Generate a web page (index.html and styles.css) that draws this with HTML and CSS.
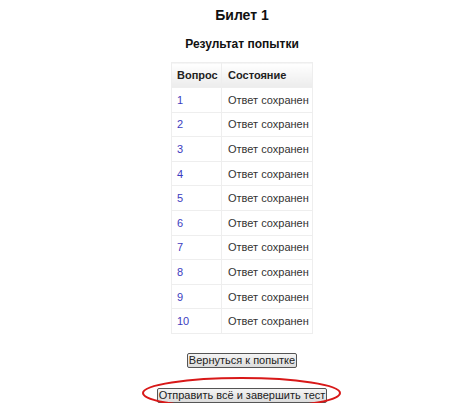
FILE: index.html
```html
<!DOCTYPE html>
<html lang="ru">
<head>
<meta charset="utf-8">
<title>Билет 1</title>
<link rel="stylesheet" href="styles.css">
</head>
<body>
<div class="page">
  <h1 class="title">Билет 1</h1>
  <h2 class="subtitle">Результат попытки</h2>
  <table class="summary">
    <thead>
      <tr><th class="c1">Вопрос</th><th class="c2">Состояние</th></tr>
    </thead>
    <tbody>
      <tr><td class="c1"><a href="#">1</a></td><td class="c2">Ответ сохранен</td></tr>
      <tr><td class="c1"><a href="#">2</a></td><td class="c2">Ответ сохранен</td></tr>
      <tr><td class="c1"><a href="#">3</a></td><td class="c2">Ответ сохранен</td></tr>
      <tr><td class="c1"><a href="#">4</a></td><td class="c2">Ответ сохранен</td></tr>
      <tr><td class="c1"><a href="#">5</a></td><td class="c2">Ответ сохранен</td></tr>
      <tr><td class="c1"><a href="#">6</a></td><td class="c2">Ответ сохранен</td></tr>
      <tr><td class="c1"><a href="#">7</a></td><td class="c2">Ответ сохранен</td></tr>
      <tr><td class="c1"><a href="#">8</a></td><td class="c2">Ответ сохранен</td></tr>
      <tr><td class="c1"><a href="#">9</a></td><td class="c2">Ответ сохранен</td></tr>
      <tr><td class="c1"><a href="#">10</a></td><td class="c2">Ответ сохранен</td></tr>
    </tbody>
  </table>
  <div class="actions">
    <button class="btn" type="button">Вернуться к попытке</button>
    <div class="submit-wrap">
      <button class="btn" type="button">Отправить всё и завершить тест</button>
      <svg class="ring" width="201" height="34" viewBox="0 0 201 34" aria-hidden="true">
        <ellipse cx="100.5" cy="17" rx="98.5" ry="15" fill="none" stroke="#d81818" stroke-width="2"/>
      </svg>
    </div>
  </div>
</div>
</body>
</html>
```

FILE: styles.css
```css
html, body {
  margin: 0;
  padding: 0;
  background: #ffffff;
}

body {
  font-family: "Liberation Sans", Arial, sans-serif;
  color: #222;
}

.page {
  padding-left: 13px;
  display: flex;
  flex-direction: column;
  align-items: center;
}

.title {
  margin: 7px 0 0;
  font-size: 14px;
  line-height: 16px;
  font-weight: bold;
  color: #111;
}

.subtitle {
  margin: 14px 0 0;
  font-size: 12px;
  line-height: 14px;
  font-weight: bold;
  color: #111;
}

.summary {
  margin-top: 11px;
  border-collapse: collapse;
  font-size: 11px;
  width: 142px;
}

.summary th,
.summary td {
  text-align: left;
  padding: 0 0 0 5px;
  border: 1px solid #eeeeee;
  white-space: nowrap;
}

.summary th {
  height: 24px;
  font-weight: bold;
  color: #222;
  background: linear-gradient(#ffffff, #ececec);
}

.summary td {
  height: 23.6px;
  color: #333;
}

.summary .c1 {
  width: 44px;
}

.summary .c2 {
  padding-left: 6px;
}

.summary a {
  color: #3c3cc0;
  text-decoration: none;
}

.actions {
  margin-top: 19px;
  display: flex;
  flex-direction: column;
  align-items: center;
  gap: 20px;
}

.btn {
  font-family: "Liberation Sans", Arial, sans-serif;
  font-size: 11px;
  line-height: 12px;
  height: 15px;
  padding: 0 1px;
  color: #222;
  border: 1px solid #555;
  border-radius: 2px;
  background: linear-gradient(#f4f4f4, #dcdcdc);
}

.submit-wrap {
  position: relative;
  display: flex;
}

.ring {
  position: absolute;
  left: 50%;
  top: 50%;
  margin-left: -101px;
  margin-top: -19px;
  pointer-events: none;
}
```
